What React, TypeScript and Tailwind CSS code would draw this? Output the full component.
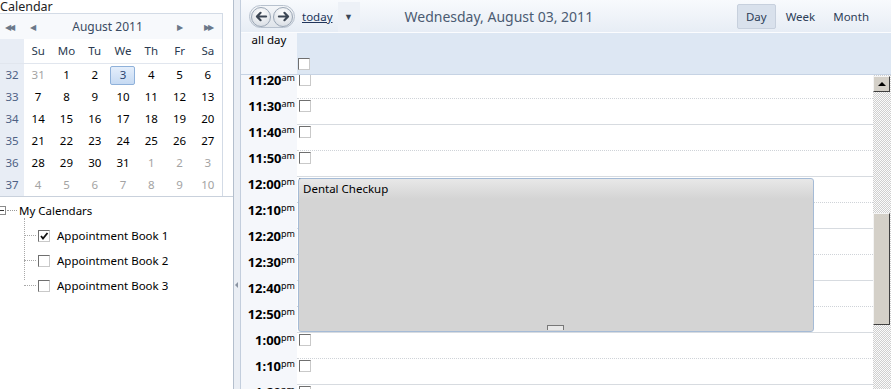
import React from "react";

const font = "font-['Noto_Sans','Open_Sans',sans-serif]";

const weeks: [number, number[]][] = [
  [32, [31, 1, 2, 3, 4, 5, 6]],
  [33, [7, 8, 9, 10, 11, 12, 13]],
  [34, [14, 15, 16, 17, 18, 19, 20]],
  [35, [21, 22, 23, 24, 25, 26, 27]],
  [36, [28, 29, 30, 31, 1, 2, 3]],
  [37, [4, 5, 6, 7, 8, 9, 10]],
];

const isOther = (row: number, i: number, d: number) =>
  (row === 0 && d > 20) || (row >= 4 && d < 15 && !(row === 4 && i < 4));

const slots = [
  ["11:20", "am"],
  ["11:30", "am"],
  ["11:40", "am"],
  ["11:50", "am"],
  ["12:00", "pm"],
  ["12:10", "pm"],
  ["12:20", "pm"],
  ["12:30", "pm"],
  ["12:40", "pm"],
  ["12:50", "pm"],
  ["1:00", "pm"],
  ["1:10", "pm"],
  ["1:20", "pm"],
];

const CheckBox = ({ checked = false }: { checked?: boolean }) => (
  <span className="relative block w-[12px] h-[12px] shrink-0 bg-white border border-t-[#6f6f6f] border-l-[#6f6f6f] border-r-[#c9c9c9] border-b-[#c9c9c9]">
    {checked && (
      <svg viewBox="0 0 10 10" className="absolute left-0 top-0 w-[10px] h-[10px]">
        <path d="M2 5 L4 7.5 L8.5 2" fill="none" stroke="#111" strokeWidth="1.8" />
      </svg>
    )}
  </span>
);

const MiniCalendar = () => (
  <div className="w-[223px] border-t border-r border-[#d3dbe6] text-[11.5px]">
    <div className="h-[25px] flex items-center bg-[#f7f9fc] text-[#6b7889] text-[8px]">
      <span className="w-[20px] pl-[5px] tracking-[-2px]">◀◀</span>
      <span className="ml-[10px]">◀</span>
      <span className="flex-1 text-center text-[12px] text-[#3a4b62] pl-[2px]">August 2011</span>
      <span className="mr-[21px]">▶</span>
      <span className="mr-[10px] tracking-[-2px]">▶▶</span>
    </div>
    <div className="flex h-[25px] border-b border-[#e1e6ee]">
      <div className="w-[24px] bg-[#e8edf5]" />
      {["Su", "Mo", "Tu", "We", "Th", "Fr", "Sa"].map((d) => (
        <div key={d} className="flex-1 flex items-center justify-center text-[#2b3a50]">
          {d}
        </div>
      ))}
    </div>
    {weeks.map(([wk, days], r) => (
      <div key={wk} className="flex h-[22px]">
        <div className="w-[24px] bg-[#e8edf5] flex items-center justify-center text-[#4e6184]">{wk}</div>
        {days.map((d, i) => (
          <div key={i} className="flex-1 flex items-center justify-center">
            <span
              className={
                r === 0 && d === 3
                  ? "w-[25px] h-[19px] flex items-center justify-center rounded-[2px] border border-[#8fb1da] bg-[linear-gradient(#e4eefb,#c6daf3)] text-[#2d4670]"
                  : isOther(r, i, d)
                  ? "text-[#a3a3a3]"
                  : "text-black"
              }
            >
              {d}
            </span>
          </div>
        ))}
      </div>
    ))}
  </div>
);

const Tree = () => (
  <div className="relative text-[11.5px] text-black">
    <div className="flex items-center h-[26px] pt-[1px]">
      <span className="w-[9px] h-[9px] -ml-[3px] border border-[#8a8a8a] bg-white flex items-center justify-center">
        <span className="w-[5px] h-[1px] bg-[#333]" />
      </span>
      <span className="w-[10px] border-t border-dotted border-[#9a9a9a] mx-[1px]" />
      <span className="ml-[1px]">My Calendars</span>
    </div>
    <div className="ml-[24px] border-l border-dotted border-[#a8a8a8] h-[62px] absolute top-[21px]" />
    {["Appointment Book 1", "Appointment Book 2", "Appointment Book 3"].map((t, i) => (
      <div key={t} className="flex items-center h-[25px] ml-[24px]">
        <span className="w-[12px] border-t border-dotted border-[#a8a8a8]" />
        <span className="ml-[2px]">
          <CheckBox checked={i === 0} />
        </span>
        <span className="ml-[7px]">{t}</span>
      </div>
    ))}
  </div>
);

const NavPill = () => (
  <div className="flex items-center gap-[2px] h-[23px] px-[1px] rounded-full border border-[#b7c1ce] bg-[linear-gradient(#f4f6f9,#dfe4ea)]">
    {["M12 6 H3 M6 2 L2 6 L6 10", "M2 6 H11 M8 2 L12 6 L8 10"].map((d, i) => (
      <span
        key={i}
        className="w-[20px] h-[20px] rounded-full border border-[#9aa6b5] bg-[radial-gradient(circle_at_50%_30%,#ffffff,#d2d8e0)] flex items-center justify-center"
      >
        <svg viewBox="0 0 14 12" className="w-[13px] h-[11px]">
          <path d={d} fill="none" stroke="#3c4654" strokeWidth="2.4" strokeLinecap="round" strokeLinejoin="round" />
        </svg>
      </span>
    ))}
  </div>
);

const Toolbar = () => (
  <div className="h-[33px] pt-[1px] flex items-center border-b border-[#fbfcfe] bg-[linear-gradient(#f8fafd,#e7edf5)] text-[11.5px]">
    <div className="ml-[8px]">
      <NavPill />
    </div>
    <span className="ml-[7px] underline text-[#21355a]">today</span>
    <span className="ml-[5px] w-[22px] h-[30px] flex items-center justify-center bg-[#edf1f7] text-[#3b4656] text-[9px]">▼</span>
    <span className="ml-[45px] text-[14px] text-[#4b5b72]">Wednesday, August 03, 2011</span>
    <div className="flex-1" />
    <span className="h-[25px] px-[8px] flex items-center rounded-[2px] border border-[#c7d0dd] bg-[#d9e1ec] text-[#2d3e58]">Day</span>
    <span className="ml-[10px] text-[#2d3e58]">Week</span>
    <span className="ml-[18px] mr-[22px] text-[#2d3e58]">Month</span>
  </div>
);

const Scrollbar = () => (
  <div className="w-[18px] flex flex-col bg-[image:repeating-conic-gradient(#cfcfcf_0_25%,#fbfbfb_0_50%)] bg-[length:2px_2px]">
    <div className="mt-[1px] h-[16px] w-[17px] bg-[#d4d0c8] border border-t-[#f4f4f4] border-l-[#f4f4f4] border-r-[#404040] border-b-[#404040] flex items-center justify-center">
      <span className="w-0 h-0 border-l-[4px] border-r-[4px] border-b-[4px] border-l-transparent border-r-transparent border-b-black" />
    </div>
    <div className="mt-[121px] h-[112px] w-[17px] bg-[#d4d0c8] border border-t-[#f4f4f4] border-l-[#f4f4f4] border-r-[#404040] border-b-[#404040]" />
  </div>
);

const DayGrid = () => (
  <div className="flex-1 flex overflow-hidden">
    <div className="flex-1 overflow-hidden">
      <div className="-mt-[3px] relative">
        {slots.map(([t, ap], i) => (
          <div key={t} className="flex h-[26px]">
            <div className="w-[56px] bg-[#f5f7fb] flex justify-end pr-[2px] leading-[14px] pt-[1px]">
              <span className="text-[13px] font-bold text-black">{t}</span>
              <span className="text-[9px] leading-[9px] text-black">{ap}</span>
            </div>
            <div
              className={`flex-1 flex items-start bg-white pl-[2px] pt-[1px] border-t ${
                i % 2 === 0 ? "border-solid border-[#d7dbe0]" : "border-dotted border-[#cfd3d8]"
              }`}
            >
              <CheckBox />
            </div>
          </div>
        ))}
        <div className="absolute left-[57px] top-[106px] w-[516px] h-[154px] rounded-[3px] border border-[#a5bbd6] bg-[linear-gradient(#e8e8e8,#d4d4d4_20px)] text-[11.5px] text-black">
          <div className="pl-[4px] pt-[1px]">Dental Checkup</div>
          <span className="absolute left-[248px] bottom-[1px] w-[17px] h-[5px] border border-[#777] border-b-0 bg-[#e8e8e8]" />
        </div>
      </div>
    </div>
    <Scrollbar />
  </div>
);

export default function App() {
  return (
    <div className={`w-[891px] h-[389px] flex overflow-hidden bg-white ${font}`}>
      <div className="w-[234px] shrink-0 flex flex-col border-r border-[#b4bfcd]">
        <div className="h-[13px] text-[12.5px] leading-[13px] text-[#222]">Calendar</div>
        <MiniCalendar />
        <div className="h-[1px] bg-[#c9d1dc]" />
        <Tree />
      </div>
      <div className="w-[6px] shrink-0 bg-[#eaeef4] flex items-center">
        <span className="ml-[1px] mt-[180px] w-0 h-0 border-t-[3px] border-b-[3px] border-r-[3px] border-t-transparent border-b-transparent border-r-[#8a94a2]" />
      </div>
      <div className="flex-1 flex flex-col border-l border-[#c3cedd]">
        <Toolbar />
        <div className="h-[42px] flex border-b border-[#c6d3e4] text-[11.5px]">
          <div className="w-[56px] bg-[#f3f6fb] text-center leading-[14px] text-black">all day</div>
          <div className="flex-1 bg-[#dde7f3] flex items-end pl-[1px] pb-[4px]">
            <CheckBox />
          </div>
        </div>
        <DayGrid />
      </div>
    </div>
  );
}
